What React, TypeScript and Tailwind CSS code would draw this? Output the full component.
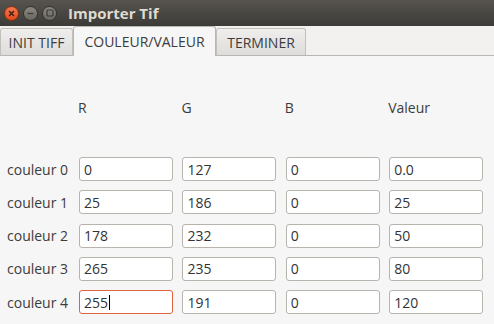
import { useState } from "react";

type Row = { label: string; values: string[] };

const rows: Row[] = [
  { label: "couleur 0", values: ["0", "127", "0", "0.0"] },
  { label: "couleur 1", values: ["25", "186", "0", "25"] },
  { label: "couleur 2", values: ["178", "232", "0", "50"] },
  { label: "couleur 3", values: ["265", "235", "0", "80"] },
  { label: "couleur 4", values: ["255", "191", "0", "120"] },
];

const headers = ["R", "G", "B", "Valeur"];
const tabs = [
  { label: "INIT TIFF", w: "w-[73px]" },
  { label: "COULEUR/VALEUR", w: "w-[143px]" },
  { label: "TERMINER", w: "w-[90px]" },
];

function TitleBar() {
  return (
    <div className="flex h-[26px] items-center bg-gradient-to-b from-[#57544e] to-[#3c3b37]">
      <div className="ml-[4px] flex items-center gap-[4px]">
        <span className="flex h-[15px] w-[15px] items-center justify-center rounded-full border border-[#8a2f12] bg-gradient-to-b from-[#f47a4e] to-[#df4b1a]">
          <svg width="7" height="7" viewBox="0 0 7 7">
            <path d="M1 1L6 6M6 1L1 6" stroke="#3c1a0e" strokeWidth="1.3" />
          </svg>
        </span>
        <span className="flex h-[15px] w-[15px] items-center justify-center rounded-full border border-[#34332f] bg-gradient-to-b from-[#8a8780] to-[#6a6760]">
          <svg width="7" height="7" viewBox="0 0 7 7">
            <path d="M0.5 3.5H6.5" stroke="#3c3b37" strokeWidth="1.3" />
          </svg>
        </span>
        <span className="flex h-[15px] w-[15px] items-center justify-center rounded-full border border-[#34332f] bg-gradient-to-b from-[#8a8780] to-[#6a6760]">
          <svg width="8" height="8" viewBox="0 0 8 8">
            <rect x="1" y="1" width="6" height="6" rx="1" fill="none" stroke="#3c3b37" strokeWidth="1.2" />
          </svg>
        </span>
      </div>
      <span className="ml-[11px] text-[15px] font-bold text-[#dfdbd2]">Importer Tif</span>
    </div>
  );
}

function Tabs() {
  const [active, setActive] = useState(1);
  return (
    <div className="flex h-[30px] items-end border-b border-[#b9b7b2] bg-[#f2f1f0]">
      {tabs.map((t, i) =>
        i === active ? (
          <button
            key={t.label}
            onClick={() => setActive(i)}
            className={`relative -mb-px h-[30px] ${t.w} rounded-t-[3px] border border-b-0 border-[#b9b7b2] bg-[#f6f6f6] text-[14px] text-[#3c3c3c]`}
          >
            {t.label}
          </button>
        ) : (
          <button
            key={t.label}
            onClick={() => setActive(i)}
            className={`h-[27px] ${t.w} rounded-t-[3px] border border-b-0 border-[#c2c0bb] bg-gradient-to-b from-[#efeeec] to-[#dedddb] text-[14px] text-[#3c3c3c]`}
          >
            {t.label}
          </button>
        )
      )}
    </div>
  );
}

export default function App() {
  return (
    <div
      className="flex h-[324px] w-[494px] flex-col overflow-hidden bg-[#f6f6f6]"
      style={{ fontFamily: '"Open Sans", "DejaVu Sans", sans-serif' }}
    >
      <TitleBar />
      <Tabs />
      <div className="flex flex-col pt-[43px]">
        <div className="grid grid-cols-[68.6px_repeat(4,94px)] gap-x-[9.4px] text-[14px] leading-[18px] text-[#3c3c3c]">
          <span />
          {headers.map((h) => (
            <span key={h}>{h}</span>
          ))}
        </div>
        <div className="mt-[40px] flex flex-col gap-[9.3px]">
          {rows.map((r, ri) => (
            <div key={r.label} className="grid grid-cols-[69.6px_repeat(4,94px)] items-center gap-x-[9.4px]">
              <span className="pl-[7px] text-[14px] text-[#3c3c3c]">{r.label}</span>
              {r.values.map((v, vi) => {
                const focused = ri === 4 && vi === 0;
                return (
                  <div
                    key={vi}
                    className={`flex h-[24px] items-center rounded-[3px] border bg-white px-[4px] text-[14px] text-[#333333] ${
                      focused ? "border-[#e0633d]" : "border-[#b7b4ae]"
                    }`}
                  >
                    <span>{v}</span>
                    {focused ? <span className="ml-px h-[15px] w-px bg-black" /> : null}
                  </div>
                );
              })}
            </div>
          ))}
        </div>
      </div>
    </div>
  );
}
